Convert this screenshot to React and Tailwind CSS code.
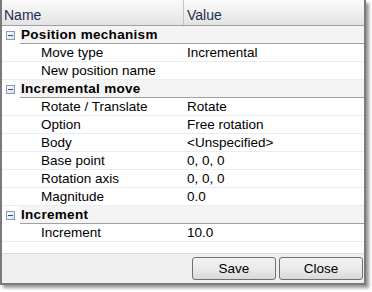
import React from 'react';

// --- Property grid data ---
const groups = [
    {
        title: 'Position mechanism',
        rows: [
            ['Move type', 'Incremental'],
            ['New position name', ''],
        ],
    },
    {
        title: 'Incremental move',
        rows: [
            ['Rotate / Translate', 'Rotate'],
            ['Option', 'Free rotation'],
            ['Body', '<Unspecified>'],
            ['Base point', '0, 0, 0'],
            ['Rotation axis', '0, 0, 0'],
            ['Magnitude', '0.0'],
        ],
    },
    {
        title: 'Increment',
        rows: [['Increment', '10.0']],
    },
];

function MinusBox() {
    return (
        <svg width="9" height="9" viewBox="0 0 9 9" className="block">
            <defs>
                <linearGradient id="mb" x1="0" y1="0" x2="1" y2="1">
                    <stop offset="0" stopColor="#ffffff" />
                    <stop offset="1" stopColor="#d6dde8" />
                </linearGradient>
            </defs>
            <rect x="0.5" y="0.5" width="8" height="8" fill="url(#mb)" stroke="#8a9ab0" />
            <line x1="2" y1="4.5" x2="7" y2="4.5" stroke="#2d4f93" strokeWidth="1" />
        </svg>
    );
}

function CategoryRow({ title }) {
    return (
        <div className="flex h-[18px]">
            <div className="w-[18px] flex items-center shrink-0 pl-[4px] pt-[1px]">
                <MinusBox />
            </div>
            <div className="flex-1 flex items-center bg-[#f4f4f4] border-b border-[#a0a0a0] pl-[1px] pt-[2px] font-bold text-[13.5px] tracking-[0.3px] text-black">
                {title}
            </div>
        </div>
    );
}

function PropertyRow({ name, value }) {
    return (
        <div className="flex h-[18px] border-b border-[#e6eef2] text-[13.5px] text-black">
            <div className="w-[182px] shrink-0 pl-[39px] pt-[2px] flex items-center whitespace-nowrap">{name}</div>
            <div className="flex-1 pl-[3px] pt-[2px] flex items-center whitespace-nowrap">{value}</div>
        </div>
    );
}

function Button({ children }) {
    return (
        <button className="w-[84px] h-[23px] rounded-[3px] border border-[#707070] bg-gradient-to-b from-[#f2f2f2] via-[#ebebeb] to-[#d9d9d9] text-[13.5px] text-black leading-none">
            {children}
        </button>
    );
}

export default function App() {
    return (
        <div className="w-[372px] h-[292px] bg-white overflow-hidden" style={{ fontFamily: '"Liberation Sans", Arial, sans-serif' }}>
            <div className="w-[366px] h-[285px] flex flex-col border-l-2 border-r-2 border-b-2 border-[#7a7a7a] bg-white shadow-[3px_3px_3px_rgba(0,0,0,0.4)]">
                {/* header */}
                <div className="flex h-[26px] shrink-0 border-b border-[#a0a0a0] bg-gradient-to-b from-[#fbfbfb] to-[#e3e3e3] text-[14px] text-[#1c2f4c]">
                    <div className="w-[182px] shrink-0 border-r border-[#c4c4c4] pl-[2px] pt-[5px] flex items-center">Name</div>
                    <div className="flex-1 pl-[3px] pt-[5px] flex items-center">Value</div>
                </div>

                {/* grid */}
                <div className="flex-1">
                    {groups.map(group => (
                        <div key={group.title}>
                            <CategoryRow title={group.title} />
                            {group.rows.map(([name, value]) => (
                                <PropertyRow key={name + group.title} name={name} value={value} />
                            ))}
                        </div>
                    ))}
                </div>

                {/* buttons */}
                <div className="h-[30px] shrink-0 bg-[#efefef] border-t border-[#dcdcdc] flex items-center justify-end gap-[3px] pr-[1px]">
                    <Button>Save</Button>
                    <Button>Close</Button>
                </div>
            </div>
        </div>
    );
}
